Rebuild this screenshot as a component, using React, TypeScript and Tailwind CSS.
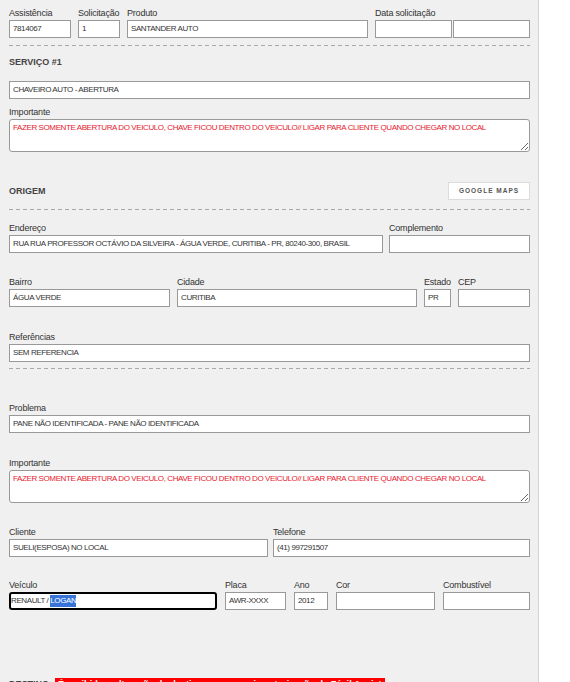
import React from 'react';

const Label: React.FC<{ children?: React.ReactNode }> = ({ children }) => (
  <div className="h-[13px] text-[9px] leading-[13px] tracking-[-0.2px] text-[#333] whitespace-nowrap">{children}</div>
);

const Box: React.FC<{ value?: string }> = ({ value }) => (
  <div className="h-[18px] bg-white border border-[#999] flex items-center px-[3px] text-[8px] tracking-[-0.4px] text-[#333] whitespace-nowrap overflow-hidden">
    {value}
  </div>
);

const Field: React.FC<{ label: string; value?: string; className?: string }> = ({ label, value, className }) => (
  <div className={className}>
    <Label>{label}</Label>
    <Box value={value} />
  </div>
);

const Dashed: React.FC<{ className?: string }> = ({ className }) => (
  <div className={`h-px bg-[linear-gradient(to_right,#a8a8a8_4px,transparent_4px)] bg-[length:7px_1px] ${className ?? ''}`} />
);

const Title: React.FC<{ children?: React.ReactNode; className?: string }> = ({ children, className }) => (
  <div className={`text-[9px] leading-[12px] font-bold text-[#444] whitespace-nowrap ${className ?? ''}`}>{children}</div>
);

const NOTE =
  'FAZER SOMENTE ABERTURA DO VEICULO, CHAVE FICOU DENTRO DO VEICULO// LIGAR PARA CLIENTE QUANDO CHEGAR NO LOCAL';

const Importante: React.FC<{ className?: string }> = ({ className }) => (
  <div className={className}>
    <Label>Importante</Label>
    <textarea
      readOnly
      value={NOTE}
      className="block w-full h-[33px] bg-white border border-[#999] rounded-[3px] p-[3px] text-[8px] leading-[10px] tracking-[-0.4px] text-[#e8202e] outline-none resize-y font-['Liberation_Sans',Arial,sans-serif]"
    />
  </div>
);

export default function App() {
  return (
    <div className="w-[570px] h-[682px] overflow-hidden bg-white font-['Liberation_Sans',Arial,sans-serif]">
      <div className="w-[539px] h-full bg-[#f0f0f0] border-r border-[#d4d4d4] pl-[9px] pr-[8px] pt-[7px]">
        {/* cabeçalho */}
        <div className="flex gap-[7px]">
          <Field label="Assistência" value="7814067" className="w-[62px]" />
          <Field label="Solicitação" value="1" className="w-[42px]" />
          <Field label="Produto" value="SANTANDER AUTO" className="w-[241px]" />
          <div className="w-[155px]">
            <Label>Data solicitação</Label>
            <div className="flex gap-px">
              <div className="w-[77px]"><Box /></div>
              <div className="w-[77px]"><Box /></div>
            </div>
          </div>
        </div>

        <Dashed className="mt-[7px]" />

        {/* serviço */}
        <Title className="mt-[10px]">SERVIÇO #1</Title>
        <div className="mt-[13px]">
          <Box value="CHAVEIRO AUTO - ABERTURA" />
        </div>
        <Importante className="mt-[7px]" />

        {/* origem */}
        <div className="mt-[30px] flex items-center justify-between">
          <Title>ORIGEM</Title>
          <button className="w-[82px] h-[18px] bg-white border border-[#dcdcdc] text-[6.5px] font-bold tracking-[1px] text-[#555]">
            GOOGLE MAPS
          </button>
        </div>
        <Dashed className="mt-[9px]" />

        <div className="mt-[12px] flex gap-[6px]">
          <Field
            label="Endereço"
            value="RUA RUA PROFESSOR OCTÁVIO DA SILVEIRA - ÁGUA VERDE, CURITIBA - PR, 80240-300, BRASIL"
            className="w-[374px]"
          />
          <Field label="Complemento" className="w-[141px]" />
        </div>

        <div className="mt-[23px] flex gap-[7px]">
          <Field label="Bairro" value="ÁGUA VERDE" className="w-[161px]" />
          <Field label="Cidade" value="CURITIBA" className="w-[240px]" />
          <Field label="Estado" value="PR" className="w-[27px]" />
          <Field label="CEP" className="w-[72px]" />
        </div>

        <Field label="Referências" value="SEM REFERENCIA" className="mt-[24px]" />

        <Dashed className="mt-[6px]" />

        {/* problema */}
        <Field
          label="Problema"
          value="PANE NÃO IDENTIFICADA - PANE NÃO IDENTIFICADA"
          className="mt-[33px]"
        />
        <Importante className="mt-[24px]" />

        <div className="mt-[23px] flex gap-[5px]">
          <Field label="Cliente" value="SUELI(ESPOSA)  NO LOCAL" className="w-[259px]" />
          <Field label="Telefone" value="(41) 997291507" className="w-[257px]" />
        </div>

        <div className="mt-[22px] flex gap-[8px]">
          <div className="w-[208px]">
            <Label>Veículo</Label>
            <div className="h-[18px] bg-white border-2 border-black rounded-[3px] flex items-center text-[8px] tracking-[-0.4px] text-[#333] whitespace-pre">
              RENAULT / <span className="bg-[#3874d8] text-white">LOGAN</span>
            </div>
          </div>
          <Field label="Placa" value="AWR-XXXX" className="w-[61px]" />
          <Field label="Ano" value="2012" className="w-[34px]" />
          <Field label="Cor" className="w-[99px]" />
          <Field label="Combustível" className="w-[87px]" />
        </div>

        {/* destino */}
        <div className="mt-[68px] flex items-start gap-[6px]">
          <Title>DESTINO</Title>
          <div className="bg-[#ff0000] text-white font-bold text-[9px] leading-[12px] px-[3px] tracking-[0.1px] whitespace-nowrap">
            É proibido a alteração de destino sem a previa autorização da Fácil Assist
          </div>
        </div>
      </div>
    </div>
  );
}
